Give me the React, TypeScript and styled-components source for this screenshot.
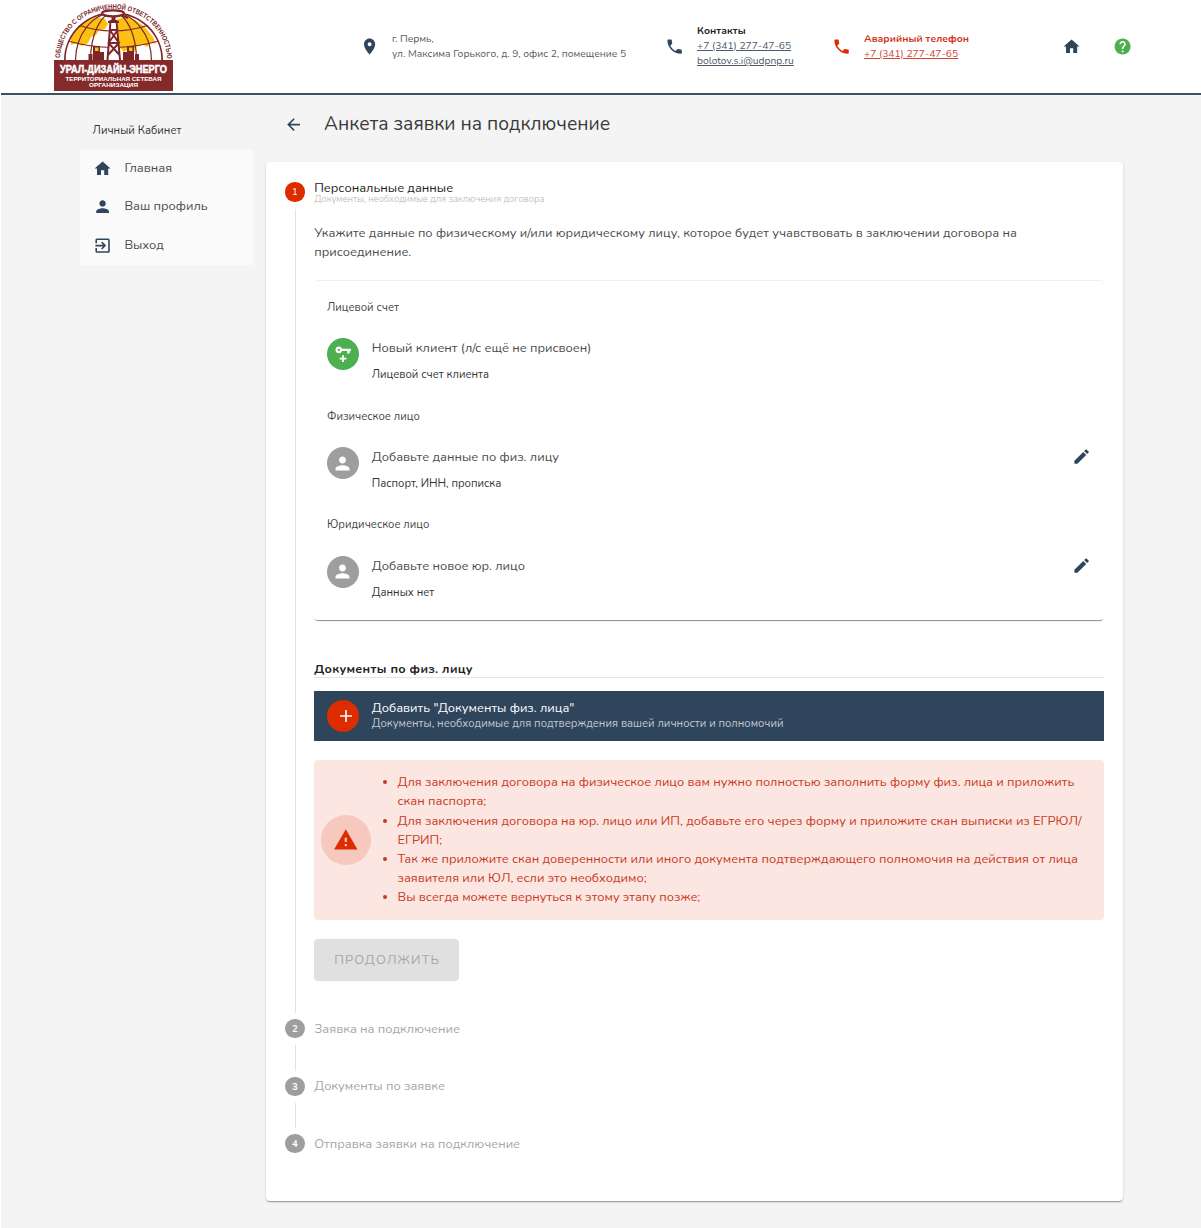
import React from 'react';
import styled, { createGlobalStyle } from 'styled-components';
import { MdPlace, MdPhone, MdHome, MdHelp, MdPerson, MdExitToApp, MdArrowBack, MdEdit, MdWarning } from 'react-icons/md';

const NAVY = '#2f455c';
const RED = '#dd2c00';
const GREY = '#9e9e9e';

const GlobalStyle = createGlobalStyle`
  * { box-sizing: border-box; }
  body {
    margin: 0;
    background: #f4f4f4;
    color: #4c4c4c;
    font-family: "Nunito", "Open Sans", "Noto Sans", sans-serif;
    font-size: 12.8px;
    line-height: 19.2px;
  }
  svg { display: block; flex: none; }
`;

const Page = styled.div`
  min-height: 1228px;
  border-left: 1px solid #fff;
`;

const Header = styled.header`
  display: grid;
  grid-template-columns: 306px 32px 273px 32px 135px 32px 198px 51px 20px;
  align-items: center;
  height: 95px;
  padding-left: 53px;
  background: #fff;
  border-bottom: 2px solid #3d5166;
  font-size: 10.24px;
  line-height: 15px;
  white-space: nowrap;
`;

const HeaderText = styled.div<{ $color?: string }>`
  display: flex;
  flex-direction: column;
  align-items: flex-start;
  color: ${p => p.$color ?? '#5a5a5a'};
`;

const HeaderTitle = styled.strong<{ $color?: string }>`
  color: ${p => p.$color ?? '#222'};
  font-weight: 700;
  letter-spacing: .06px;
`;

const HeaderLink = styled.a`
  color: inherit;
  text-decoration: underline;
`;

const Body = styled.div`
  display: grid;
  grid-template-columns: 173px 857px;
  column-gap: 13px;
  padding-left: 79px;
`;

const SideTitle = styled.div`
  height: 54.5px;
  padding: 26px 0 0 12.6px;
  font-size: 11.2px;
  color: #333;
`;

const SideMenu = styled.nav`
  background: #fafafa;
`;

const SideItem = styled.div`
  display: flex;
  align-items: center;
  gap: 12.6px;
  height: 38.4px;
  padding-left: 12.6px;
`;

const TitleRow = styled.div`
  display: flex;
  align-items: center;
  gap: 20.8px;
  height: 67px;
  padding: 0 0 8px 18px;
`;

const Title = styled.h1`
  margin: 0;
  padding-top: 1px;
  font-size: 19.2px;
  font-weight: 400;
  color: #3a3a3a;
`;

const Card = styled.main`
  height: 1039px;
  padding: 20.4px 19px 0 19.4px;
  background: #fff;
  border-radius: 4px;
  box-shadow: 0 2px 1px -1px rgba(0, 0, 0, .2), 0 1px 1px rgba(0, 0, 0, .14), 0 1px 3px rgba(0, 0, 0, .12);
`;

const Step = styled.section<{ $height: number }>`
  display: flex;
  gap: 9.6px;
  height: ${p => p.$height}px;
`;

const Rail = styled.div`
  display: flex;
  flex-direction: column;
  align-items: center;
  width: 19.2px;
`;

const StepDot = styled.div<{ $active?: boolean }>`
  flex: none;
  width: 19.2px;
  height: 19.2px;
  border-radius: 50%;
  background: ${p => (p.$active ? RED : GREY)};
  color: #fff;
  font-size: 9.6px;
  font-weight: ${p => (p.$active ? 400 : 700)};
  text-align: center;
`;

const RailLine = styled.div`
  flex: 1;
  width: 1px;
  margin: 7px 0 6px 1px;
  background: #e2e2e2;
`;

const StepContent = styled.div`
  flex: 1;
  min-width: 0;
  white-space: nowrap;
`;

const StepLabel = styled.div`
  padding-top: 0.6px;
  color: #a6a6a6;
`;

const ActiveLabel = styled.div`
  height: 41.6px;
  line-height: 12px;
  color: #222;
`;

const StepHint = styled.div`
  font-size: 9.45px;
  font-weight: 300;
  line-height: 10.6px;
  color: #b4b4b4;
`;

const Intro = styled.p`
  margin: 0;
  height: 56.2px;
  white-space: pre-line;
`;

const Panel = styled.div`
  height: 340px;
  padding: 6.6px 12.8px 0;
  border-top: 1px solid #f0f0f0;
  border-radius: 4px;
  box-shadow: 0 2px 1px -1px rgba(0, 0, 0, .45);
`;

const GroupTitle = styled.div`
  height: 38.4px;
  font-size: 11.2px;
  line-height: 39.6px;
  color: #444;
`;

const Entry = styled.div`
  display: flex;
  gap: 12.8px;
  height: 70.4px;
  padding-top: 12.2px;
`;

const EntryText = styled.div`
  flex: 1;
  padding-top: 0.6px;
`;

const EntrySub = styled.div`
  margin-top: 6.8px;
  font-size: 11.2px;
  color: #333;
`;

const EditButton = styled.span`
  color: ${NAVY};
`;

const Avatar = styled.div<{ $color: string; $shift?: number }>`
  display: flex;
  align-items: center;
  justify-content: center;
  flex: none;
  width: 32px;
  height: 32px;
  padding-left: ${p => p.$shift ?? 0}px;
  border-radius: 50%;
  background: ${p => p.$color};
  color: #fff;
`;

const SectionTitle = styled.h2`
  margin: 37.2px 0 12.3px;
  height: 21px;
  padding-top: 1.4px;
  border-bottom: 1px solid #e4e4e4;
  font-size: 12.5px;
  font-weight: 700;
  letter-spacing: 0.3px;
  color: #222;
`;

const AddBar = styled.div`
  display: flex;
  align-items: center;
  gap: 12.8px;
  height: 50px;
  padding: 0 12.8px;
  background: ${NAVY};
  color: #fff;
  line-height: 16px;
`;

const AddHint = styled.div`
  font-size: 11.2px;
  color: #c3cad1;
`;

const Alert = styled.div`
  display: flex;
  align-items: center;
  height: 160px;
  margin-top: 19px;
  padding-left: 6.6px;
  border-radius: 4px;
  background: #fbe6e1;
  color: #c93a22;
`;

const AlertBadge = styled.div`
  display: flex;
  align-items: center;
  justify-content: center;
  width: 50px;
  height: 50px;
  border-radius: 50%;
  background: #f6c8be;
  color: ${RED};
`;

const AlertList = styled.ul`
  margin: 0;
  padding: 1.4px 0 0 26.8px;
  white-space: pre-line;
`;

const ContinueButton = styled.button`
  display: block;
  width: 145px;
  height: 42px;
  margin-top: 19px;
  padding: 1px 0 0 1px;
  border: 0;
  border-radius: 4px;
  background: #e0e0e0;
  color: #a6a6a6;
  font: 400 12.8px "Nunito", "Open Sans", sans-serif;
  letter-spacing: 1.14px;
`;

const LogoDrawing = styled.svg`
  margin-top: 1px;
  overflow: visible;
`;

const MAROON = '#7d2529';

function Logo() {
  return (
    <LogoDrawing width="119" height="88" viewBox="0 0 119 88">
      <defs>
        <path id="ring" d="M6 56A53.5 50 0 0 1 113 56" />
        <clipPath id="dome"><path d="M10 57A49.5 48 0 0 1 109 57Z" /></clipPath>
      </defs>
      <g clipPath="url(#dome)">
        <path fill="#fbc012" d="M17 33l8-10 9-6 9-3 8 2 3 5-3 5-6 1-3 5-5 2-3 6-6 3-5-3-6 2zM62 17l9-4 10 4 9 6 9 11 3 7-5-2-4 5-5-3-5 2-3 7-5-4-5 3-6-6-4-8 3-6-4-5z" />
        <g fill="none" stroke={MAROON} strokeWidth="1.2">
          <path d="M10 57A49.5 48 0 0 1 109 57" strokeWidth="3.4" />
          <ellipse cx="59.5" cy="58" rx="38" ry="48" />
          <ellipse cx="59.5" cy="58" rx="23" ry="48" />
          <path d="M24 22Q59 34 95 22M14 38Q59 51 105 38" />
        </g>
      </g>
      <ellipse cx="59" cy="10.3" rx="11" ry="3" fill="#fff" stroke={MAROON} strokeWidth="2.3" />
      <path d="M68 12.5l6 2.5" stroke={MAROON} strokeWidth="2" />
      <path d="M55.5 18h8l3 39H53z" fill="#fff" />
      <path d="M53.5 57l3-39h6l3.5 39M54 19h11M55 27h9.5M54 40h11.5M56.5 28l8.5 12-11 12M63 28l-8.5 12 11 12" fill="none" stroke={MAROON} strokeWidth="2" />
      <path fill={MAROON} d="M57.5 13h4v6h-4zM39 43h7v6h4v8H39zM69 49h4v-6h7v14H69zM34.5 51h4v6h-4zM81 51h4v6h-4z" />
      <path fill="#fbc012" d="M41 44.5h3.5V48H41zM75 44.5h3.5V48H75z" />
      <text fill={MAROON} fontSize="7" fontWeight="700" fontFamily="Liberation Sans, sans-serif">
        <textPath href="#ring" textLength="161" lengthAdjust="spacingAndGlyphs" startOffset="1">ОБЩЕСТВО С ОГРАНИЧЕННОЙ ОТВЕТСТВЕННОСТЬЮ</textPath>
      </text>
      <rect y="57" width="119" height="31" fill="#842a2b" />
      <g fill="#fff" fontWeight="700" fontFamily="Liberation Sans, sans-serif">
        <text x="6" y="69.5" fontSize="10" textLength="107" lengthAdjust="spacingAndGlyphs" stroke="#fff" strokeWidth=".5">УРАЛ-ДИЗАЙН-ЭНЕРГО</text>
        <text x="11.5" y="77.5" fontSize="6.2" textLength="96" lengthAdjust="spacingAndGlyphs">ТЕРРИТОРИАЛЬНАЯ СЕТЕВАЯ</text>
        <text x="35" y="84" fontSize="6.2" textLength="49" lengthAdjust="spacingAndGlyphs">ОРГАНИЗАЦИЯ</text>
      </g>
    </LogoDrawing>
  );
}

function KeyPlusIcon() {
  return (
    <svg width="20" height="20" viewBox="0 0 24 24" fill="currentColor">
      <path fillRule="evenodd" d="M7 3a4 4 0 0 1 3.8 2.7H21.5v3H20v2.6h-3V8.3h-6.2A4 4 0 1 1 7 3zm0 2.6a1.4 1.4 0 1 0 0 2.8 1.4 1.4 0 0 0 0-2.8zM10.9 13.500h2.200v3h3v2.200h-3v3h-2.200v-3h-3v-2.200h3z" />
    </svg>
  );
}

const entries = [
  { group: 'Лицевой счет', title: 'Новый клиент (л/с ещё не присвоен)', sub: 'Лицевой счет клиента', isNew: true },
  { group: 'Физическое лицо', title: 'Добавьте данные по физ. лицу', sub: 'Паспорт, ИНН, прописка' },
  { group: 'Юридическое лицо', title: 'Добавьте новое юр. лицо', sub: 'Данных нет' },
];

const notes = [
  'Для заключения договора на физическое лицо вам нужно полностью заполнить форму физ. лица и приложить\nскан паспорта;',
  'Для заключения договора на юр. лицо или ИП, добавьте его через форму и приложите скан выписки из ЕГРЮЛ/\nЕГРИП;',
  'Так же приложите скан доверенности или иного документа подтверждающего полномочия на действия от лица\nзаявителя или ЮЛ, если это необходимо;',
  'Вы всегда можете вернуться к этому этапу позже;',
];

const menu = [
  { label: 'Главная', Icon: MdHome },
  { label: 'Ваш профиль', Icon: MdPerson },
  { label: 'Выход', Icon: MdExitToApp },
];

const nextSteps = ['Заявка на подключение', 'Документы по заявке', 'Отправка заявки на подключение'];

export default function App() {
  return (
    <Page>
      <GlobalStyle />
      <Header>
        <Logo />
        <MdPlace size={19.2} color={NAVY} />
        <HeaderText>
          <span>г. Пермь,</span>
          <span>ул. Максима Горького, д. 9, офис 2, помещение 5</span>
        </HeaderText>
        <MdPhone size={19.2} color={NAVY} />
        <HeaderText $color="#4b5b6b">
          <HeaderTitle>Контакты</HeaderTitle>
          <HeaderLink>+7 (341) 277-47-65</HeaderLink>
          <HeaderLink>bolotov.s.i@udpnp.ru</HeaderLink>
        </HeaderText>
        <MdPhone size={19.2} color={RED} />
        <HeaderText $color="#d2452c">
          <HeaderTitle $color="#d03318">Аварийный телефон</HeaderTitle>
          <HeaderLink>+7 (341) 277-47-65</HeaderLink>
        </HeaderText>
        <MdHome size={19.2} color={NAVY} />
        <MdHelp size={19.2} color="#4caf50" />
      </Header>
      <Body>
        <aside>
          <SideTitle>Личный Кабинет</SideTitle>
          <SideMenu>
            {menu.map(({ label, Icon }) => (
              <SideItem key={label}>
                <Icon size={19.2} color={NAVY} />
                <span>{label}</span>
              </SideItem>
            ))}
          </SideMenu>
        </aside>
        <div>
          <TitleRow>
            <MdArrowBack size={19.2} color={NAVY} />
            <Title>Анкета заявки на подключение</Title>
          </TitleRow>
          <Card>
            <Step $height={836.6}>
              <Rail>
                <StepDot $active>1</StepDot>
                <RailLine />
              </Rail>
              <StepContent>
                <ActiveLabel>
                  Персональные данные
                  <StepHint>Документы, необходимые для заключения договора</StepHint>
                </ActiveLabel>
                <Intro>{'Укажите данные по физическому и/или юридическому лицу, которое будет учавствовать в заключении договора на\nприсоединение.'}</Intro>
                <Panel>
                  {entries.map(e => (
                    <React.Fragment key={e.group}>
                      <GroupTitle>{e.group}</GroupTitle>
                      <Entry>
                        <Avatar $color={e.isNew ? '#4caf50' : GREY}>
                          {e.isNew ? <KeyPlusIcon /> : <MdPerson size={21} />}
                        </Avatar>
                        <EntryText>
                          {e.title}
                          <EntrySub>{e.sub}</EntrySub>
                        </EntryText>
                        {!e.isNew && <EditButton><MdEdit size={19.2} /></EditButton>}
                      </Entry>
                    </React.Fragment>
                  ))}
                </Panel>
                <SectionTitle>Документы по физ. лицу</SectionTitle>
                <AddBar>
                  <Avatar $color={RED} $shift={6}>
                    <svg width="12" height="12" viewBox="0 0 12 12" stroke="#fff" strokeWidth="1.6">
                      <path d="M0 6h12M6 0v12" />
                    </svg>
                  </Avatar>
                  <div>
                    Добавить "Документы физ. лица"
                    <AddHint>Документы, необходимые для подтверждения вашей личности и полномочий</AddHint>
                  </div>
                </AddBar>
                <Alert>
                  <AlertBadge><MdWarning size={25.6} /></AlertBadge>
                  <AlertList>
                    {notes.map(n => <li key={n}>{n}</li>)}
                  </AlertList>
                </Alert>
                <ContinueButton disabled>ПРОДОЛЖИТЬ</ContinueButton>
              </StepContent>
            </Step>
            {nextSteps.map((label, i) => (
              <Step key={label} $height={57.6}>
                <Rail>
                  <StepDot>{i + 2}</StepDot>
                  {i < nextSteps.length - 1 && <RailLine />}
                </Rail>
                <StepContent><StepLabel>{label}</StepLabel></StepContent>
              </Step>
            ))}
          </Card>
        </div>
      </Body>
    </Page>
  );
}
